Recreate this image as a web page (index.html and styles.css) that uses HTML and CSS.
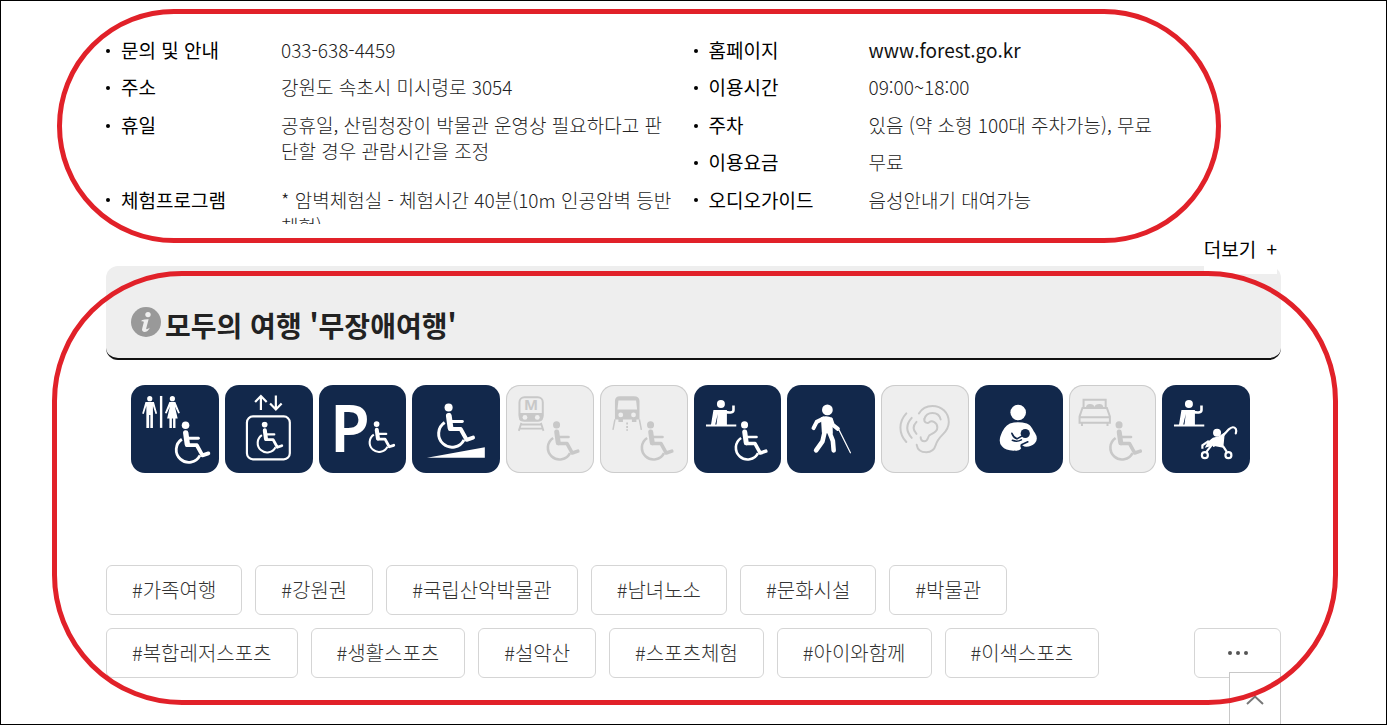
FILE: index.html
```html
<!DOCTYPE html>
<html lang="ko">
<head>
    <meta charset="UTF-8">
    <meta name="viewport" content="width=device-width, initial-scale=1.0">
    <title>국립산악박물관</title>
    <link rel="stylesheet" href="styles.css">
</head>
<body>
    <!-- shared icon shapes -->
    <svg class="sprite" aria-hidden="true">
        <symbol id="wheelchair" viewBox="0 0 38 44">
            <circle cx="11.7" cy="4.3" r="3.8" fill="currentColor"/>
            <g fill="none" stroke="currentColor" stroke-linecap="round" stroke-linejoin="round">
                <path d="M8 18.4A12.6 12.6 0 1 0 26.2 34.6" stroke-width="2.8" stroke-linecap="butt"/>
                <path d="M11.9 12L13.5 23.5" stroke-width="5.4"/>
                <path d="M13.5 24.4H23L28.6 34.6L34.6 32.6" stroke-width="3.8"/>
                <path d="M13 17.4H24.6" stroke-width="2.8"/>
            </g>
        </symbol>
        <symbol id="desk" viewBox="0 0 34 30">
            <circle cx="16" cy="5" r="4" fill="currentColor"/>
            <path d="M8.5 11H22V26H11.5L12.8 15L10.2 26H6Z" fill="currentColor"/>
            <path d="M21 13.2Q28.6 14.5 28.6 11V6.5" fill="none" stroke="currentColor" stroke-width="2.6"/>
            <path d="M1 26.6H31.4" stroke="currentColor" stroke-width="2.2"/>
        </symbol>
    </svg>

    <div class="container">
        <div class="info">
            <dl class="info-list">
                <div><dt>문의 및 안내</dt><dd>033-638-4459</dd></div>
                <div><dt>홈페이지</dt><dd><a href="#">www.forest.go.kr</a></dd></div>
                <div><dt>주소</dt><dd>강원도 속초시 미시령로 3054</dd></div>
                <div><dt>이용시간</dt><dd>09:00~18:00</dd></div>
                <div class="tall"><dt>휴일</dt><dd>공휴일, 산림청장이 박물관 운영상 필요하다고 판단할 경우 관람시간을 조정</dd></div>
                <div><dt>주차</dt><dd>있음 (약 소형 100대 주차가능), 무료</dd></div>
                <div><dt>이용요금</dt><dd>무료</dd></div>
                <div><dt>체험프로그램</dt><dd>* 암벽체험실 - 체험시간 40분(10m 인공암벽 등반체험)</dd></div>
                <div><dt>오디오가이드</dt><dd>음성안내기 대여가능</dd></div>
            </dl>
            <button type="button" class="more">더보기 <span>+</span></button>
        </div>

        <section>
            <div class="section-head">
                <svg class="info-icon" viewBox="0 0 30 30" aria-hidden="true">
                    <circle cx="15" cy="15" r="15" fill="#999"/>
                    <circle cx="17" cy="7.6" r="2.7" fill="#eee"/>
                    <path d="M10.6 13.2Q14 12 17.6 12.2L15.2 21.6Q15.2 23 18.8 20.8Q17 25 13.2 25Q10.4 24.6 11.2 21.6L12.8 15.2Q12.8 14 10.6 14.4Z" fill="#eee"/>
                </svg>
                <h2>모두의 여행 '무장애여행'</h2>
            </div>

            <ul class="access">
                <li>
                    <svg viewBox="0 0 88 88" role="img" aria-label="장애인 화장실">
                        <g fill="currentColor">
                            <circle cx="18.8" cy="13.7" r="2.6"/>
                            <path d="M14.5 17H23L26.2 28.5L24.6 29L22 21V43H19.4V30H18.2V43H15.4V21L12.8 29L11.2 28.5Z"/>
                            <rect x="29" y="11" width="2.4" height="32"/>
                            <circle cx="41.5" cy="13.7" r="2.6"/>
                            <path d="M38.5 17H44.5L49 28L47.4 28.7L44 21.5L46.8 33.5H44.6V43H42.2V33.5H41V43H38.5V33.5H36.2L39 21.5L35.7 28.7L34 28Z"/>
                        </g>
                        <use href="#wheelchair" x="43" y="36" width="38" height="44"/>
                    </svg>
                </li>
                <li>
                    <svg viewBox="0 0 88 88" role="img" aria-label="엘리베이터">
                        <g fill="none" stroke="currentColor" stroke-width="2.2">
                            <path d="M36 25V11.5M30.2 17L36 11L41.8 17M51 10.5V24M45.2 18.5L51 24.5L56.8 18.5"/>
                            <rect x="22" y="31.5" width="43" height="43" rx="6"/>
                        </g>
                        <use href="#wheelchair" x="31" y="36.5" width="28.5" height="33"/>
                    </svg>
                </li>
                <li>
                    <svg viewBox="0 0 88 88" role="img" aria-label="장애인 주차장">
                        <text class="parking" x="11" y="67">P</text>
                        <use href="#wheelchair" x="49" y="36" width="28.5" height="33"/>
                    </svg>
                </li>
                <li>
                    <svg viewBox="0 0 88 88" role="img" aria-label="경사로">
                        <use href="#wheelchair" x="24" y="18" width="41" height="47"/>
                        <path d="M15 73L73 62.5V73Z" fill="currentColor"/>
                    </svg>
                </li>
                <li class="off">
                    <svg viewBox="0 0 88 88" role="img" aria-label="지하철">
                        <rect x="13.5" y="12.3" width="23.4" height="23.4" rx="5" fill="none" stroke="currentColor" stroke-width="2"/>
                        <path d="M13 28H37V33Q37 36.5 33 36.5H17Q13 36.5 13 33Z" fill="currentColor"/>
                        <circle cx="19" cy="32.5" r="2.4" fill="#eee"/>
                        <circle cx="31.4" cy="32.5" r="2.4" fill="#eee"/>
                        <text class="metro" x="25.2" y="25.5">M</text>
                        <path d="M15.4 38L12.8 46M35 38L37.6 46M14.6 39.6H35.8M13.4 43.8H37" fill="none" stroke="currentColor" stroke-width="1.8"/>
                        <use href="#wheelchair" x="39.5" y="36" width="36" height="41"/>
                    </svg>
                </li>
                <li class="off">
                    <svg viewBox="0 0 88 88" role="img" aria-label="버스">
                        <path d="M15 16Q15 11.3 20 11.3H34Q39.6 11.3 39.6 16V34.5H36.5V37H32V34.5H23V37H18.5V34.5H15Z" fill="currentColor"/>
                        <path d="M18.5 15.5H36.2L37.2 24.5H17.5Z" fill="#eee"/>
                        <circle cx="20.8" cy="30" r="2.4" fill="#eee"/>
                        <circle cx="33.6" cy="30" r="2.4" fill="#eee"/>
                        <path d="M15 34.5L13 45M39.5 34.5L41.5 45" stroke="currentColor" stroke-width="1.5"/>
                        <path d="M27.2 37.5V46" stroke="currentColor" stroke-width="1.8" stroke-dasharray="2 1.5"/>
                        <use href="#wheelchair" x="39.5" y="36" width="36" height="41"/>
                    </svg>
                </li>
                <li>
                    <svg viewBox="0 0 88 88" role="img" aria-label="안내데스크">
                        <use href="#desk" x="11" y="14" width="34" height="30"/>
                        <use href="#wheelchair" x="39.5" y="36" width="36" height="41"/>
                    </svg>
                </li>
                <li>
                    <svg viewBox="0 0 88 88" role="img" aria-label="시각장애인 편의시설">
                        <circle cx="40.5" cy="25" r="5.4" fill="currentColor"/>
                        <path d="M34 32.5Q39.5 30 45.5 33L46 49L35 48Z" fill="currentColor"/>
                        <g fill="none" stroke="currentColor" stroke-linecap="round" stroke-linejoin="round" stroke-width="4.6">
                            <path d="M36 33.8L29.8 37L26.6 43.2" stroke-width="4"/>
                            <path d="M44 34.6L46 40L51 44" stroke-width="4"/>
                            <path d="M38 46L35.6 56.5L29.2 65.6M42.4 47L46 56L46.8 65.6"/>
                            <path d="M52.4 45.5L63.6 68" stroke-width="1.2"/>
                        </g>
                    </svg>
                </li>
                <li class="off">
                    <svg viewBox="0 0 88 88" role="img" aria-label="청각장애인 편의시설">
                        <g fill="none" stroke="currentColor" stroke-linecap="round" stroke-width="2">
                            <path d="M38 28.5C41 23.5 46 21 51.5 21C61 21 68 28 68 37C68 43 65.5 46 62 49.5C58 53.5 56 56 54.8 60.5C53.5 65 50 67.4 45.5 67.4C40 67.4 36.5 64.5 35.8 60"/>
                            <path d="M43.5 34C44.5 30.5 47.5 28 51.5 28C56 28 59 30.5 59.8 34.5"/>
                            <path d="M43.5 34C42.8 38 47 38.8 48.5 37.2C51 35 56.5 37.5 56.5 42.5C56.5 47.5 51 48.5 48.5 50.5C46.5 52.5 47.5 56.5 43.5 56.5C41 56.5 39.8 54.5 39.8 52.5"/>
                            <path d="M25.4 28.5C17.5 37 17.5 48.5 25.4 57.2M30.8 33C25 39.5 25 46.5 30.8 53M35.6 37C31.8 41 31.8 45 35.6 49"/>
                        </g>
                    </svg>
                </li>
                <li>
                    <svg viewBox="0 0 88 88" role="img" aria-label="수유실">
                        <circle cx="43.3" cy="27.6" r="7.8" fill="currentColor"/>
                        <path d="M35 38.5Q43 36 52 38.5C56 40 57.5 44 60 48Q64 54 60 58.5Q56 62.5 49.5 61.8L46.5 59.8Q44.5 60.5 46.3 63.4Q45 66 40 65.8Q31 66.2 27 61.5Q23.5 57.5 25.5 51.5Q28.5 41.5 35 38.5Z" fill="currentColor"/>
                        <circle cx="50.4" cy="48.6" r="4.6" fill="#12284b"/>
                        <path d="M37 48.5Q38.5 52.5 42 54L46.5 51.5M37.5 55.5Q42 57.5 46.5 55" fill="none" stroke="#12284b" stroke-width="1.6" stroke-linecap="round"/>
                        <path d="M46.5 60L53 57" stroke="#12284b" stroke-width="1.6" stroke-linecap="round"/>
                    </svg>
                </li>
                <li class="off">
                    <svg viewBox="0 0 88 88" role="img" aria-label="장애인 객실">
                        <path d="M14.6 23V14.8H36.8V23M13.5 23H38L41 31.5V37.8H10.6V31.5ZM10.6 32.4H41M13 38V41M38.6 38V41" fill="none" stroke="currentColor" stroke-width="2"/>
                        <path d="M17 23Q17 19 21 19Q25 19 25.5 22Q26 19 30.5 19Q34.5 19 34.5 23Z" fill="currentColor"/>
                        <use href="#wheelchair" x="39" y="36" width="36" height="41"/>
                    </svg>
                </li>
                <li>
                    <svg viewBox="0 0 88 88" role="img" aria-label="유모차 대여">
                        <use href="#desk" x="11" y="14" width="34" height="30"/>
                        <circle cx="55.2" cy="47.8" r="4" fill="currentColor"/>
                        <path d="M51 53L57 51.5L63 47.5L61.5 63L51 61L43 63L46 57Z" fill="currentColor"/>
                        <g fill="none" stroke="currentColor" stroke-width="2.2">
                            <path d="M52 61L67 44.5Q71.5 40.5 74 44Q75 46 74 48.5" stroke-linecap="round"/>
                            <path d="M61 61L65 67M50 60L44.5 67M47 56L40.5 60.5V64"/>
                            <circle cx="43" cy="70.4" r="3"/>
                            <circle cx="66.6" cy="70.4" r="3"/>
                        </g>
                    </svg>
                </li>
            </ul>
        </section>

        <div class="tags">
            <ul class="tag-list">
                <li><a href="#">#가족여행</a></li>
                <li><a href="#">#강원권</a></li>
                <li><a href="#">#국립산악박물관</a></li>
                <li><a href="#">#남녀노소</a></li>
                <li><a href="#">#문화시설</a></li>
                <li><a href="#">#박물관</a></li>
                <li><a href="#">#복합레저스포츠</a></li>
                <li><a href="#">#생활스포츠</a></li>
                <li><a href="#">#설악산</a></li>
                <li><a href="#">#스포츠체험</a></li>
                <li><a href="#">#아이와함께</a></li>
                <li><a href="#">#이색스포츠</a></li>
            </ul>
            <button type="button" class="tag-more" aria-label="태그 더보기">
                <svg viewBox="0 0 22 6" aria-hidden="true"><g fill="#555"><circle cx="3" cy="3" r="2"/><circle cx="11" cy="3" r="2"/><circle cx="19" cy="3" r="2"/></g></svg>
            </button>
        </div>

        <button type="button" class="to-top" aria-label="맨 위로">
            <svg viewBox="0 0 18 10" aria-hidden="true"><path d="M1 9L9 1.5L17 9" fill="none" stroke="#777" stroke-width="2"/></svg>
        </button>
    </div>

    <!-- red outlines around the two areas -->
    <div class="mark mark-info"></div>
    <div class="mark mark-access"></div>
</body>
</html>
```
FILE: styles.css
```css
* {
    box-sizing: border-box;
}
body {
    position: relative;
    min-height: 100vh;
    margin: 0;
    border: 1px solid #000;
    background-color: #fff;
    color: #000;
    font-family: "Noto Sans CJK KR", sans-serif;
    font-size: 19px;
    line-height: 26px;
}
ul, dl, dd, h2 {
    margin: 0;
    padding: 0;
}
ul {
    list-style: none;
}
a {
    color: inherit;
    text-decoration: none;
}
button {
    border: none;
    padding: 0;
    background-color: #fff;
    font: inherit;
    color: inherit;
    cursor: pointer;
}
svg {
    display: block;
}
.sprite {
    position: absolute;
    width: 0;
    height: 0;
}
.container {
    position: relative;
    max-width: 1175px;
    margin: 0 auto;
    padding-top: 36px;
}

/* visitor info */
.info-list {
    display: grid;
    grid-template-columns: 1fr 1fr;
    grid-template-rows: repeat(5, minmax(0, 1fr));
    height: 187px;
    overflow: hidden;
}
.info-list div {
    display: flex;
}
.info-list .tall {
    grid-row: span 2;
}
.info-list dt {
    flex: none;
    width: 175px;
    font-weight: 400;
}
.info-list dt::before {
    content: "";
    display: inline-block;
    width: 4px;
    height: 4px;
    margin: 0 11px 4px 0;
    border-radius: 50%;
    background-color: #000;
    vertical-align: middle;
}
.info-list dd {
    width: 395px;
    font-weight: 300;
    color: #222;
    word-break: break-all;
}
.info-list a {
    font-weight: 400;
    color: #111;
}
.more {
    position: relative;
    display: block;
    height: 50px;
    margin-left: auto;
    margin-right: 4px;
}
.more span {
    margin-left: 5px;
}

/* barrier-free travel */
.section-head {
    display: flex;
    align-items: center;
    gap: 4px;
    height: 94px;
    margin-top: -8px;
    padding: 20px 25px 0;
    border-bottom: 2px solid #111;
    border-radius: 12px;
    background-color: #eee;
}
.section-head h2 {
    padding-top: 6px;
    font-size: 28px;
    line-height: 36px;
    font-weight: 700;
    color: #222;
}
.info-icon {
    width: 30px;
    height: 30px;
}
.access {
    display: grid;
    grid-template-columns: repeat(12, 1fr);
    gap: 6px;
    padding: 25px 31px 92px 25px;
}
.access li {
    aspect-ratio: 1;
    border-radius: 14px;
    background-color: #12284b;
    color: #fff;
    overflow: hidden;
}
.access .off {
    background-color: #eee;
    box-shadow: inset 0 0 0 1px #ccc;
    color: #c8c8c8;
}
.parking {
    font: 600 65px "Noto Sans", sans-serif;
    fill: currentColor;
}
.metro {
    font: 700 15px "Noto Sans", sans-serif;
    fill: currentColor;
    text-anchor: middle;
}

/* tags */
.tags {
    display: flex;
    align-items: flex-end;
    gap: 13px;
}
.tag-list {
    flex: 1;
    display: flex;
    flex-wrap: wrap;
    gap: 13px;
}
.tag-list a,
.tag-more {
    display: block;
    height: 50px;
    border: 1px solid #d5d5d5;
    border-radius: 6px;
}
.tag-list a {
    padding: 0 25px;
    font-size: 20px;
    line-height: 48px;
    font-weight: 300;
    color: #333;
}
.tag-more {
    width: 87px;
}
.tag-more svg {
    width: 22px;
    margin: 0 auto;
}
.to-top {
    position: absolute;
    top: 671px;
    right: 0;
    width: 52px;
    height: 52px;
    border: 1px solid #c8c8c8;
    border-bottom: none;
}
.to-top svg {
    width: 18px;
    margin: 2px auto 0;
}

.mark {
    position: absolute;
    border: 5px solid #e12129;
    pointer-events: none;
}
.mark-info {
    top: 8px;
    left: 56px;
    right: 165px;
    height: 234px;
    border-radius: 117px;
}
.mark-access {
    top: 270px;
    left: 51px;
    right: 48px;
    height: 434px;
    border-radius: 130px;
}
```
